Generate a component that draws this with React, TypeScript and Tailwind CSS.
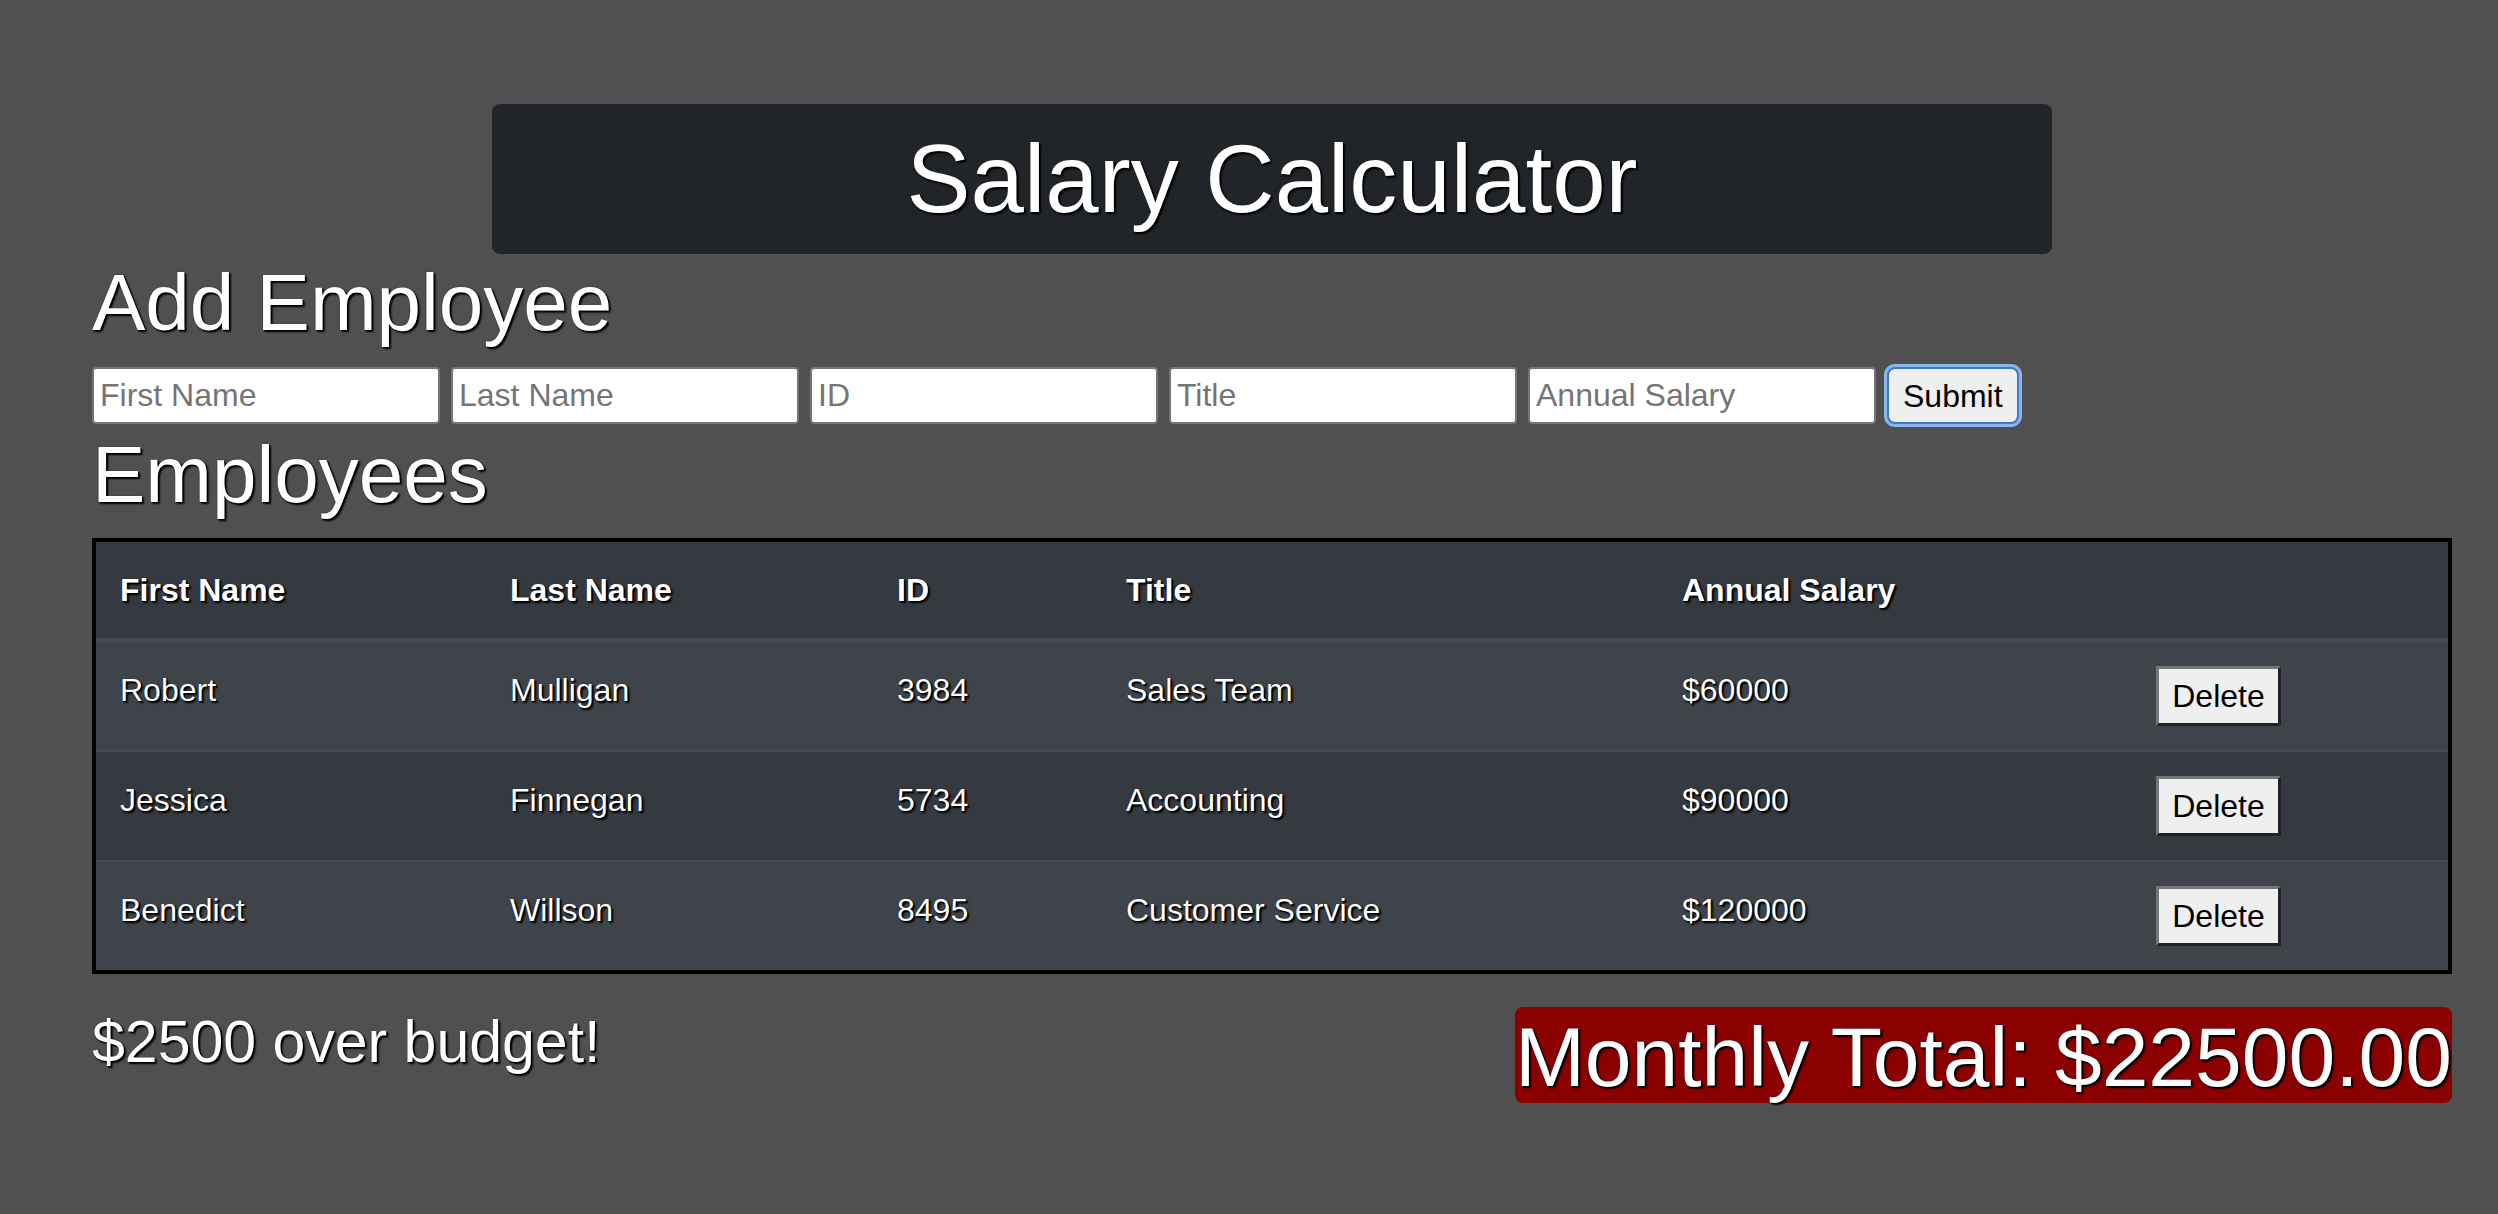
import React from "react";

const employees = [
  { first: "Robert", last: "Mulligan", id: "3984", title: "Sales Team", salary: "$60000" },
  { first: "Jessica", last: "Finnegan", id: "5734", title: "Accounting", salary: "$90000" },
  { first: "Benedict", last: "Willson", id: "8495", title: "Customer Service", salary: "$120000" },
];

const fields = ["First Name", "Last Name", "ID", "Title", "Annual Salary"];

const shadow = "[text-shadow:0_0_1px_#000,1px_1px_1px_#000,2px_2px_2px_#000]";

const App = () => {
  return (
    <div className="min-h-screen bg-[#505050] pl-[92px] pr-[46px] pt-[104px] font-['Liberation_Sans',Arial,sans-serif] text-white">
      <div className="mx-[400px] flex h-[150px] items-center justify-center rounded-lg bg-[#212529]">
        <h1 className={`text-[96px] leading-none ${shadow}`}>Salary Calculator</h1>
      </div>

      <h2 className={`mt-[5px] text-[80px] leading-[88px] ${shadow}`}>Add Employee</h2>

      <form className="mt-[20px] flex items-center gap-[11px]" onSubmit={(e) => e.preventDefault()}>
        {fields.map((f) => (
          <input
            key={f}
            placeholder={f}
            className="h-[57px] w-[348px] rounded-[4px] border-2 border-[#767676] bg-white px-[6px] text-[32px] text-black placeholder:text-[#757575]"
          />
        ))}
        <button
          type="submit"
          className="h-[57px] rounded-[8px] border-2 border-[#3b78c9] bg-[#efefef] px-[14px] text-[32px] text-black ring-[3px] ring-[#8ab6ee]"
        >
          Submit
        </button>
      </form>

      <h2 className={`mt-[7px] text-[80px] leading-[88px] ${shadow}`}>Employees</h2>

      <div className="mt-[19px] border-4 border-black">
        <table className="w-full table-fixed border-collapse text-left text-[32px] leading-[48px]">
          <colgroup>
            <col className="w-[390px]" />
            <col className="w-[387px]" />
            <col className="w-[229px]" />
            <col className="w-[556px]" />
            <col className="w-[474px]" />
            <col />
          </colgroup>
          <thead>
            <tr className="border-b-4 border-[#454d55] bg-[#343a40]">
              {fields.map((f) => (
                <th key={f} className={`p-[24px] align-top font-bold ${shadow}`}>
                  {f}
                </th>
              ))}
              <th className="p-[24px]" />
            </tr>
          </thead>
          <tbody>
            {employees.map((emp, i) => (
              <tr
                key={emp.id}
                className={`border-t-2 border-[#454d55] ${i % 2 === 0 ? "bg-[#3e444a]" : "bg-[#343a40]"}`}
              >
                <td className={`p-[24px] align-top ${shadow}`}>{emp.first}</td>
                <td className={`p-[24px] align-top ${shadow}`}>{emp.last}</td>
                <td className={`p-[24px] align-top ${shadow}`}>{emp.id}</td>
                <td className={`p-[24px] align-top ${shadow}`}>{emp.title}</td>
                <td className={`p-[24px] align-top ${shadow}`}>{emp.salary}</td>
                <td className="p-[24px] align-top">
                  <button className="h-[60px] w-[125px] border-[3px] border-b-[#222] border-l-[#767676] border-r-[#222] border-t-[#767676] bg-[#efefef] text-[32px] leading-none text-black">
                    Delete
                  </button>
                </td>
              </tr>
            ))}
          </tbody>
        </table>
      </div>

      <div className="mt-[33px] flex items-start justify-between">
        <p className={`text-[59px] leading-[70px] ${shadow}`}>$2500 over budget!</p>
        <div className={`rounded-lg bg-[#8b0000] pt-[4px] text-[84px] leading-[92px] ${shadow}`}>Monthly Total: $22500.00</div>
      </div>
    </div>
  );
};

export default App;
